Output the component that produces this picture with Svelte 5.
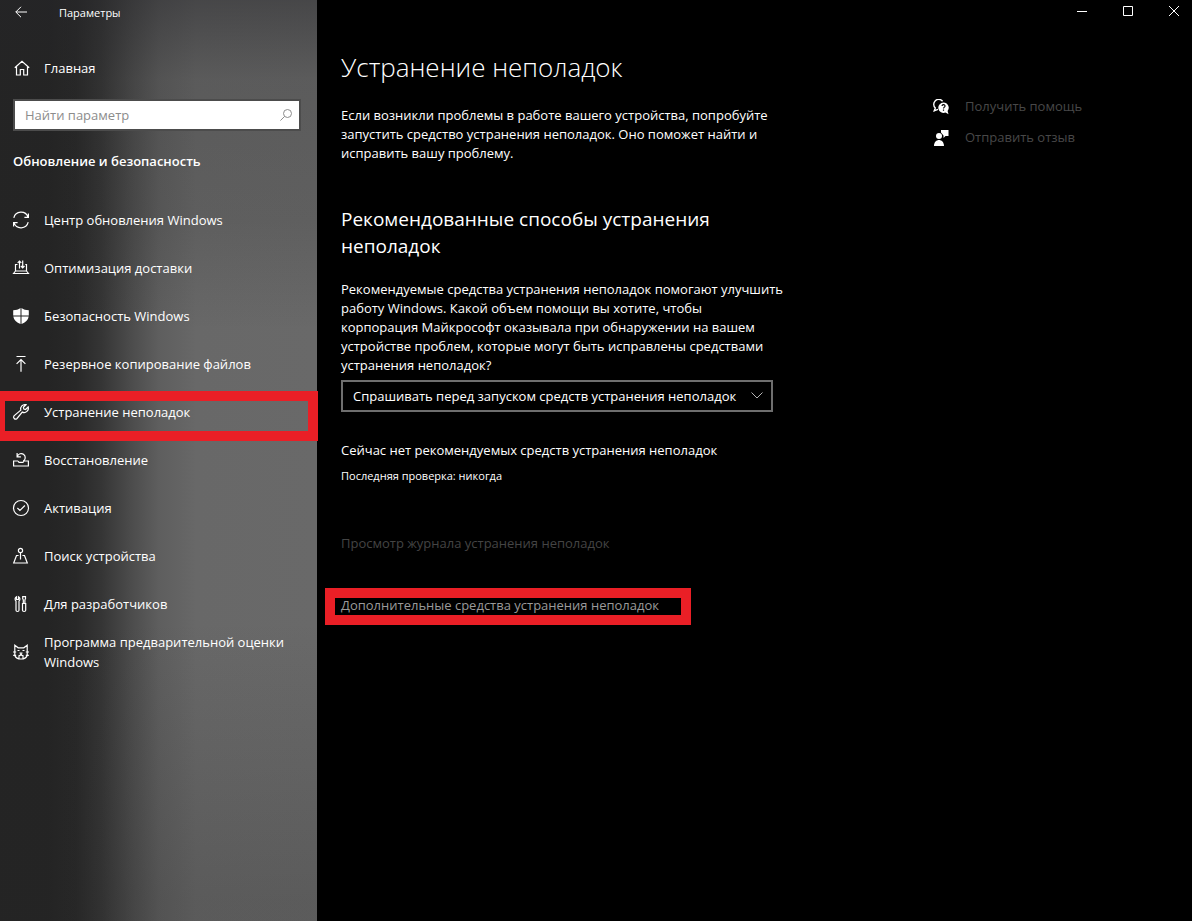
<script lang="ts">
  type NavItem = { id: string; label: string };

  const items: NavItem[] = [
    { id: "update", label: "Центр обновления Windows" },
    { id: "delivery", label: "Оптимизация доставки" },
    { id: "security", label: "Безопасность Windows" },
    { id: "backup", label: "Резервное копирование файлов" },
    { id: "troubleshoot", label: "Устранение неполадок" },
    { id: "recovery", label: "Восстановление" },
    { id: "activation", label: "Активация" },
    { id: "find", label: "Поиск устройства" },
    { id: "developers", label: "Для разработчиков" },
    { id: "insider", label: "Программа предварительной оценки Windows" },
  ];

  let selected = $state("troubleshoot");
  let query = $state("");
</script>

{#snippet icon(id: string)}
  <svg class="icon" viewBox="0 0 16 16" aria-hidden="true">
    {#if id === "update"}
      <path d="M.8 5.8A7.4 7.4 0 0 1 15 5.200M15.400 1.400v4h-4M15.200 10.200A7.400 7.400 0 0 1 1 10.800M.6 14.600v-4h4" />
    {:else if id === "delivery"}
      <path d="M4.500 4.500h-2V11h11V4.500h-1.200M2.500 11 .6 13.500h14.800L13.500 11M6.500 8.500V1M4.700 2.800 6.500 1l1.800 1.800M9.700.500v7.300M7.900 6l1.800 1.800L11.500 6" />
    {:else if id === "security"}
      <path class="solid" d="M7.500 0C5.400 1.500 3 2.200.2 2.200V7.400h7.300zM8.500 0c2.100 1.500 4.500 2.200 7.300 2.200V7.400H8.500zM.3 8.400h7.200V16C3.600 14.400.8 12 .3 8.400zM15.700 8.400H8.500V16c3.900-1.600 6.700-4 7.200-7.600z" />
    {:else if id === "backup"}
      <path d="M3.500.5h9M8 15.800V3.500M3.600 7.900 8 3.500l4.400 4.400" />
    {:else if id === "troubleshoot"}
      <path d="M15.200 2.900a4.300 4.300 0 0 1-5.900 5.200L3.800 14.700A2 2 0 0 1 1 11.900l6.800-5.800A4.300 4.300 0 0 1 13 .7l-2.600 2.600.4 1.800 1.800.4z" />
    {:else if id === "recovery"}
      <path d="M5 9H.6v5h14.800V9H11M5 9l1 1.300h4L11 9M4.100 1v3.800h3.800M4.400 4.500a4 4 0 1 1 5.800 4.600" />
    {:else if id === "activation"}
      <circle cx="8" cy="8" r="7.500" />
      <path d="m4.400 8 2.500 2.500 5-5" />
    {:else if id === "find"}
      <circle cx="7.500" cy="2.500" r="2.100" />
      <path d="M7.500 4.600v6.900M5.600 7.500H3.500L.7 15h13.600l-2.800-7.500H9.400" />
    {:else if id === "developers"}
      <path d="M3.500.8v2.700h2V.8C7.200 1.600 7.400 4 6 5v9.300c0 1.600-3 1.600-3 0V5C1.600 4 1.800 1.600 3.500.8zM9.700.6h2.800v2.200l-.6 1v3.700h-1.600V3.800l-.6-1zM9.500 7.500h3.200v6.800c0 1.600-3.200 1.600-3.200 0z" />
    {:else if id === "insider"}
      <path d="M1.800 7.500V1.200l3.400 2.600h5.600l3.400-2.600v6.300M0 8h3.200M12.800 8H16M.2 11.300h3M12.800 11.300h3M1.800 8v3.500c.8 2.200 2.500 3.500 6.200 3.500s5.400-1.300 6.200-3.500V8M4.500 6.500h2M9.500 6.500h2M5.400 11.800c1.700 0 2.600-.8 2.600-2.300 0 1.500.9 2.300 2.600 2.300M6.500 9h3M6 12v2.500M10 12v2.500" />
    {/if}
  </svg>
{/snippet}

<div class="window">
  <aside class="sidebar">
    <header class="titlebar">
      <button class="back" aria-label="Назад">
        <svg viewBox="0 0 12 12"><path d="M12 6H.8M6 .8.8 6 6 11.2" /></svg>
      </button>
      <span>Параметры</span>
    </header>

    <a class="home" href="#home">
      <svg class="icon" viewBox="0 0 16 16" aria-hidden="true">
        <path d="M1.800 7.700 9 1.400l7.200 6.300M3.500 6.500V15h3.800V9.500h3.400V15h3.800V6.500" />
      </svg>
      Главная
    </a>

    <label class="search">
      <input type="text" placeholder="Найти параметр" aria-label="Найти параметр" bind:value={query} />
      <svg viewBox="0 0 12 12" aria-hidden="true">
        <circle cx="7.500" cy="4.500" r="4" />
        <path d="M4.600 7.400.4 11.600" />
      </svg>
    </label>

    <h2>Обновление и безопасность</h2>

    <nav>
      {#each items as item (item.id)}
        <a
          class="nav-item"
          class:selected={selected === item.id}
          href="#{item.id}"
          onclick={() => { selected = item.id; }}
        >
          {@render icon(item.id)}
          <span>{item.label}</span>
        </a>
      {/each}
    </nav>
  </aside>

  <main>
    <div class="window-controls">
      <button aria-label="Свернуть"><svg viewBox="0 0 10 10"><path d="M0 5.5h10" /></svg></button>
      <button aria-label="Развернуть"><svg viewBox="0 0 10 10"><path d="M.5.5h9v9h-9z" /></svg></button>
      <button aria-label="Закрыть"><svg viewBox="0 0 10 10"><path d="m0 0 10 10M10 0 0 10" /></svg></button>
    </div>

    <div class="page">
      <section class="content">
        <h1>Устранение неполадок</h1>
        <p class="intro">
          Если возникли проблемы в работе вашего устройства, попробуйте
          запустить средство устранения неполадок. Оно поможет найти и
          исправить вашу проблему.
        </p>

        <h3>Рекомендованные способы устранения неполадок</h3>
        <label class="question" for="mode">
          Рекомендуемые средства устранения неполадок помогают улучшить
          работу Windows. Какой объем помощи вы хотите, чтобы<br />
          корпорация Майкрософт оказывала при обнаружении на вашем
          устройстве проблем, которые могут быть исправлены средствами
          устранения неполадок?
        </label>
        <div class="combo">
          <select id="mode">
            <option>Спрашивать перед запуском средств устранения неполадок</option>
          </select>
          <svg viewBox="0 0 12 7" aria-hidden="true"><path d="M.500.500 6 6 11.500.500" /></svg>
        </div>

        <p class="status">Сейчас нет рекомендуемых средств устранения неполадок</p>
        <p class="last-check">Последняя проверка: никогда</p>

        <a class="link" href="#history">Просмотр журнала устранения неполадок</a>
        <a class="link more" href="#additional">Дополнительные средства устранения неполадок</a>
      </section>

      <div class="help">
        <a href="#help">
          <svg viewBox="0 0 16 16" aria-hidden="true">
            <path class="line" d="M9.600 2.200A5 5 0 1 0 2.300 9L1.200 11.800 5 10.400" />
            <path class="solid" d="M10.500 3.500a5.200 5.200 0 1 0 2 10l3 1.800-.9-3.400a5.200 5.200 0 0 0-4.100-8.400z" />
            <path class="mark" d="M9 7c.2-2 3.300-1.600 3 .2-.2 1-1.500 1-1.500 2.400M10.500 10.600v1.200" />
          </svg>
          Получить помощь
        </a>
        <a href="#feedback">
          <svg viewBox="0 0 16 16" aria-hidden="true">
            <circle class="solid" cx="6" cy="6" r="3" />
            <path class="solid" d="M1 16c0-8 10-8 10 0zM8 0h7.500v6h-3l-2 2V5.500L8 2.500z" />
          </svg>
          Отправить отзыв
        </a>
      </div>
    </div>
  </main>
</div>

<style>
  :global(body) {
    margin: 0;
    background: #000;
  }
  .window {
    display: flex;
    min-height: 100vh;
    font-family: "Open Sans", "Noto Sans", sans-serif;
    font-size: 13px;
    line-height: 19px;
    color: #fff;
  }
  h1, h2, h3, p { margin: 0; }
  a { color: inherit; text-decoration: none; }
  button {
    display: flex;
    align-items: center;
    justify-content: center;
    padding: 0;
    border: none;
    background: none;
    color: inherit;
  }
  svg {
    display: block;
    flex-shrink: 0;
    fill: none;
    stroke: currentColor;
    stroke-width: 1;
  }
  .solid { fill: currentColor; stroke: none; }
  .icon {
    width: 16px;
    height: 16px;
    stroke-width: 1.2;
    overflow: visible;
  }

  /* sidebar */
  .sidebar {
    flex: 0 0 317px;
    background:
      linear-gradient(rgba(37, 37, 40, 0.5), rgba(37, 37, 38, 0.2) 80px, rgba(37, 37, 37, 0.15) 220px, transparent 330px, transparent 620px, rgba(37, 37, 37, 0.2) 900px),
      linear-gradient(90deg, #242424 15%, #282828 24%, #353535 32%, #4b4b4b 41%, #5e5e5e 50%, #686868 62%, #696969);
  }
  .titlebar {
    display: flex;
    align-items: center;
    height: 24px;
    font-size: 11px;
  }
  .back { width: 42px; height: 24px; margin-right: 17px; }
  .back svg { width: 12px; height: 12px; }
  .home {
    display: flex;
    align-items: center;
    gap: 15px;
    height: 48px;
    margin-top: 20px;
    padding-left: 13px;
  }
  .search {
    display: flex;
    align-items: center;
    height: 28px;
    margin: 7px 16px 0 13px;
    border: 2px solid #4c4c4c;
    background: #fff;
    color: #8c8c8c;
  }
  .search input {
    flex: 1;
    min-width: 0;
    padding: 0 10px;
    border: none;
    outline: none;
    background: none;
    font: inherit;
    color: #222;
  }
  .search input::placeholder { color: #8c8c8c; opacity: 1; }
  .search svg { width: 12px; height: 12px; margin-right: 7px; }
  h2 {
    margin: 21px 13px 25px;
    font-size: 13px;
    font-weight: 600;
  }
  .nav-item {
    position: relative;
    display: flex;
    align-items: center;
    gap: 15px;
    height: 48px;
    padding: 0 13px;
    line-height: 20px;
  }
  /* red frame laid over the current entry */
  .nav-item.selected::after {
    content: "";
    position: absolute;
    inset: 3px -1px -5px 0;
    border: 10px solid #ea1f26;
    border-left-width: 5px;
  }

  /* main */
  main { flex: 1; min-width: 0; }
  .window-controls {
    display: flex;
    justify-content: flex-end;
    gap: 10px;
  }
  .window-controls button { width: 36px; height: 22px; }
  .window-controls svg { width: 10px; height: 10px; overflow: visible; }
  .page {
    display: flex;
    gap: 144px;
    padding: 26px 24px;
  }
  .content { flex: 0 1 448px; }
  h1 {
    font-size: 26px;
    line-height: 38px;
    font-weight: 300;
  }
  .intro { margin-top: 20px; }
  h3 {
    margin-top: 43px;
    font-size: 19px;
    line-height: 27px;
    font-weight: 400;
  }
  .question { display: block; margin-top: 20px; }
  .combo {
    position: relative;
    width: 432px;
    max-width: 100%;
    margin-top: 5px;
  }
  .combo select {
    display: block;
    width: 100%;
    height: 32px;
    padding: 0 30px 0 10px;
    border: 2px solid #6e6e6e;
    border-radius: 0;
    appearance: none;
    background: #000;
    font: inherit;
    color: #fff;
  }
  .combo svg {
    position: absolute;
    top: 12px;
    right: 10px;
    width: 12px;
    height: 7px;
    color: #b4b4b4;
  }
  .status { margin-top: 29px; }
  .last-check { margin-top: 6px; font-size: 11px; }
  .link {
    display: block;
    width: fit-content;
    margin-top: 49px;
    color: #444;
  }
  .link.more {
    position: relative;
    margin-top: 43px;
    color: #9a9a9a;
  }
  .link.more::after {
    content: "";
    position: absolute;
    inset: -8px -32px -10px -16px;
    border: 10px solid #ea1f26;
  }
  .help {
    display: flex;
    flex-direction: column;
    gap: 12px;
    padding-top: 49px;
    color: #484848;
  }
  .help a {
    display: flex;
    align-items: center;
    gap: 16px;
    white-space: nowrap;
  }
  .help svg { width: 16px; height: 16px; color: #fff; }
  .help .line { stroke-width: 1.4; }
  .help .mark { stroke: #000; stroke-width: 1.2; }
</style>
